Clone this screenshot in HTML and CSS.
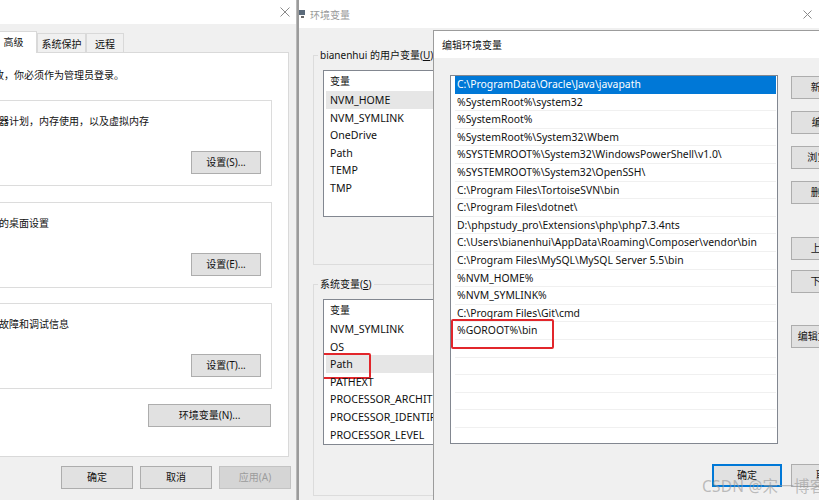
FILE: index.html
```html
<!DOCTYPE html>
<html lang="zh-CN">
<head>
<meta charset="utf-8">
<title>环境变量</title>
<link rel="stylesheet" href="styles.css">
</head>
<body>
<div class="win w1">
  <div class="tb tb1">
    <span class="xbtn"><svg width="10" height="10" viewBox="0 0 10 10"><path d="M0.5 0.5L9.5 9.5M9.5 0.5L0.5 9.5" stroke="#8a8a8a" stroke-width="1" fill="none"/></svg></span>
  </div>
  <div class="b1">
    <div class="tabs">
      <div class="tab tw-name">计算机名</div>
      <div class="tab tw-hw">硬件</div>
      <div class="tab tw-adv sel">高级</div>
      <div class="tab tw-prot">系统保护</div>
      <div class="tab tw-rem">远程</div>
    </div>
    <div class="panel">
      <div class="note">要进行大多数更改，你必须作为管理员登录。</div>
      <div class="grp">
        <div class="gtxt">视觉效果，处理器计划，内存使用，以及虚拟内存</div>
        <button class="btn bset">设置(S)...</button>
      </div>
      <div class="grp">
        <div class="gtxt">与登录帐户相关的桌面设置</div>
        <button class="btn bset">设置(E)...</button>
      </div>
      <div class="grp">
        <div class="gtxt">系统启动、系统故障和调试信息</div>
        <button class="btn bset">设置(T)...</button>
      </div>
      <div class="envrow"><button class="btn benv">环境变量(N)...</button></div>
    </div>
    <div class="foot1">
      <button class="btn bw">确定</button>
      <button class="btn bw">取消</button>
      <button class="btn bw dis">应用(A)</button>
    </div>
  </div>
</div>

<div class="win w2">
  <div class="tb tb2">
    <svg class="wicon" width="6" height="10" viewBox="0 0 6 10"><path d="M0 1h6v5H0z" fill="#5a6a7a"/><path d="M2 7h3v2H2z" fill="#6a6a6a"/></svg>
    <span class="ttl">环境变量</span>
    <span class="xbtn x2"><svg width="9" height="9" viewBox="0 0 9 9"><path d="M0.5 0.5L8.5 8.5M8.5 0.5L0.5 8.5" stroke="#8a8a8a" stroke-width="1" fill="none"/></svg></span>
  </div>
  <div class="b2">
    <fieldset class="fs fs1">
      <legend>bianenhui 的用户变量(<u>U</u>)</legend>
      <div class="lb lb-user">
        <div class="lh">变量</div>
        <div class="li hl">NVM_HOME</div>
        <div class="li">NVM_SYMLINK</div>
        <div class="li">OneDrive</div>
        <div class="li">Path</div>
        <div class="li">TEMP</div>
        <div class="li">TMP</div>
      </div>
    </fieldset>
    <fieldset class="fs fs2">
      <legend>系统变量(<u>S</u>)</legend>
      <div class="lb lb-sys">
        <div class="lh">变量</div>
        <div class="li">NVM_SYMLINK</div>
        <div class="li">OS</div>
        <div class="li hl mark-path">Path</div>
        <div class="li">PATHEXT</div>
        <div class="li">PROCESSOR_ARCHITECTURE</div>
        <div class="li">PROCESSOR_IDENTIFIER</div>
        <div class="li">PROCESSOR_LEVEL</div>
      </div>
    </fieldset>
  </div>
</div>

<div class="win w3">
  <div class="tb tb3"><span class="ttl3">编辑环境变量</span></div>
  <div class="b3">
    <div class="row3">
      <div class="plist">
        <div class="pi sel">C:\ProgramData\Oracle\Java\javapath</div>
        <div class="pi">%SystemRoot%\system32</div>
        <div class="pi">%SystemRoot%</div>
        <div class="pi">%SystemRoot%\System32\Wbem</div>
        <div class="pi">%SYSTEMROOT%\System32\WindowsPowerShell\v1.0\</div>
        <div class="pi">%SYSTEMROOT%\System32\OpenSSH\</div>
        <div class="pi">C:\Program Files\TortoiseSVN\bin</div>
        <div class="pi">C:\Program Files\dotnet\</div>
        <div class="pi">D:\phpstudy_pro\Extensions\php\php7.3.4nts</div>
        <div class="pi">C:\Users\bianenhui\AppData\Roaming\Composer\vendor\bin</div>
        <div class="pi">C:\Program Files\MySQL\MySQL Server 5.5\bin</div>
        <div class="pi">%NVM_HOME%</div>
        <div class="pi">%NVM_SYMLINK%</div>
        <div class="pi">C:\Program Files\Git\cmd</div>
        <div class="pi mark-go">%GOROOT%\bin</div>
        <div class="pi"></div>
        <div class="pi"></div>
        <div class="pi"></div>
        <div class="pi"></div>
        <div class="pi"></div>
        <div class="pi"></div>
      </div>
      <div class="bcol">
        <button class="btn bs">新建(N)</button>
        <button class="btn bs g12">编辑(E)</button>
        <button class="btn bs g12">浏览(B)...</button>
        <button class="btn bs g12">删除(D)</button>
        <button class="btn bs g33">上移(U)</button>
        <button class="btn bs g10">下移(O)</button>
        <button class="btn bs g32">编辑文本(T)...</button>
      </div>
    </div>
    <div class="foot3">
      <button class="btn bw3 def">确定</button>
      <button class="btn bw3">取消</button>
    </div>
  </div>
</div>

<div class="wm">CSDN @宋一博客</div>
</body>
</html>
```

FILE: styles.css
```css
* { box-sizing: border-box; }
html, body { margin: 0; padding: 0; }
body {
  width: 819px;
  height: 500px;
  overflow: hidden;
  position: relative;
  background: #f0f0f0;
  font-family: "Noto Sans", "Noto Sans CJK SC", sans-serif;
  font-size: 10px;
  color: #111;
}
.win {
  position: absolute;
  overflow: hidden;
  background: #f0f0f0;
}
.btn {
  font: inherit;
  color: #111;
  background: #e1e1e1;
  border: 1px solid #adadad;
  height: 23px;
  padding: 0;
  margin: 0;
  line-height: 21px;
  text-align: center;
  white-space: nowrap;
}
.tb {
  background: #fff;
  display: flex;
  align-items: center;
}
.xbtn {
  margin-left: auto;
  display: flex;
  align-items: center;
  justify-content: center;
}

/* ---------- window 1 : system properties ---------- */
.w1 {
  left: -102px;
  top: 0;
  width: 399px;
  height: 500px;
  border-right: 1px solid #b9b9b9;
}
.tb1 { height: 24px; }
.tb1 .xbtn { width: 22px; height: 24px; }
.b1 {
  padding: 7px 7px 0 8px;
}
.tabs {
  display: flex;
  align-items: flex-end;
  height: 21px;
  margin-left: 2px;
  position: relative;
  z-index: 2;
}
.tab {
  height: 19px;
  line-height: 18px;
  text-align: center;
  border: 1px solid #d9d9d9;
  border-bottom: none;
  background: #f0f0f0;
  white-space: nowrap;
}
.tab.sel {
  height: 22px;
  margin-bottom: -1px;
  background: #fff;
  line-height: 21px;
}
.tw-name { width: 48px; }
.tw-hw { width: 34px; }
.tw-adv { width: 47px; }
.tw-prot { width: 49px; line-height: 20px; }
.tw-rem { width: 38px; line-height: 20px; }
.panel {
  background: #fff;
  border: 1px solid #d9d9d9;
  height: 405px;
  padding: 15px 16px 0 14px;
}
.note { line-height: 14px; white-space: nowrap; margin-left: 3px; }
.grp {
  height: 86px;
  border: 1px solid #dcdcdc;
  margin-top: 15.5px;
  padding: 13px 10px 11px 7px;
  display: flex;
  flex-direction: column;
}
.note + .grp { margin-top: 18px; }
.gtxt { line-height: 14px; white-space: nowrap; }
.bset {
  width: 70px;
  margin-top: auto;
  align-self: flex-end;
}
.envrow {
  display: flex;
  justify-content: flex-end;
  margin-top: 15px;
  padding-right: 1px;
}
.benv { width: 123px; }
.foot1 {
  display: flex;
  justify-content: flex-end;
  gap: 7px;
  margin-top: 9px;
  margin-right: -2px;
}
.bw { width: 72px; }
.btn.dis {
  background: #d5d5d5;
  border-color: #c3c3c3;
  color: #9c9c9c;
}

/* ---------- window 2 : environment variables ---------- */
.w2 {
  left: 297px;
  top: 0;
  width: 523px;
  height: 500px;
  border-left: 2px solid #9b9b9b;
}
.tb2 { height: 28px; }
.wicon { margin-left: 0; flex: none; }
.ttl { margin-left: 5px; color: #9a9a9a; }
.x2 { width: 26px; height: 24px; }
.b2 { padding-left: 14px; }
.fs {
  margin: 0;
  border: 1px solid #dcdcdc;
  padding: 8px 9px 47px 9px;
  width: 480px;
}
.fs legend {
  line-height: 14px;
  padding: 0 2px;
  margin-left: -5px;
  white-space: nowrap;
}
.fs1 { margin-top: 20px; }
.fs2 { margin-top: 12px; padding-bottom: 50px; }
.lb {
  background: #fff;
  border: 1px solid #828790;
  width: 420px;
  overflow: hidden;
}
.lb-user { height: 147px; }
.lb-sys { height: 146px; }
.lh {
  height: 20px;
  line-height: 20px;
  padding-left: 6px;
}
.li {
  height: 17.6px;
  line-height: 18.6px;
  margin-left: 2px;
  padding-left: 4px;
  white-space: nowrap;
  position: relative;
  font-size: 10.6px;
}
.li.hl { background: #e6e6e6; }
.mark-path::after {
  content: "";
  position: absolute;
  left: -7px;
  top: -2px;
  width: 48px;
  height: 22px;
  border: 2px solid #e2262b;
  border-radius: 2px;
}

/* ---------- window 3 : edit environment variable ---------- */
.w3 {
  left: 433px;
  top: 30px;
  width: 387px;
  height: 470px;
  border-top: 1px solid #9c9c9c;
  border-left: 1px solid #9c9c9c;
}
.tb3 { height: 27px; }
.ttl3 { padding-left: 8px; }
.b3 { padding: 17px 0 0 16px; }
.row3 {
  display: flex;
  align-items: flex-start;
}
.plist {
  flex: none;
  width: 328px;
  height: 369px;
  background: #fff;
  border: 1px solid #828790;
  padding: 0 1px 0 4px;
  overflow: hidden;
}
.pi {
  height: 17.6px;
  line-height: 17.6px;
  padding-left: 2px;
  border-bottom: 1px solid #f0f0f0;
  white-space: nowrap;
  position: relative;
  font-size: 10.4px;
}
.pi.sel {
  background: #0078d7;
  color: #fff;
  border-bottom-color: #0078d7;
}
.mark-go::after {
  content: "";
  position: absolute;
  left: -4px;
  top: -3.5px;
  width: 99px;
  height: 26px;
  border: 2px solid #e2262b;
  border-radius: 2px;
}
.bcol {
  flex: none;
  display: flex;
  flex-direction: column;
  margin-left: 13px;
  padding-top: 1px;
}
.bs { width: 73px; }
.g12 { margin-top: 12px; }
.g33 { margin-top: 33px; }
.g10 { margin-top: 10px; }
.g32 { margin-top: 32px; }
.foot3 {
  display: flex;
  gap: 9px;
  margin-top: 20px;
  padding-left: 262px;
}
.bw3 { width: 70px; flex: none; }
.btn.def {
  border: 1px solid #0078d7;
  box-shadow: inset 0 0 0 1px #0078d7;
}

/* ---------- watermark ---------- */
.wm {
  position: absolute;
  left: 702px;
  top: 476px;
  font-size: 15.5px;
  line-height: 20px;
  letter-spacing: 0.2px;
  color: rgba(150, 150, 150, 0.6);
  white-space: nowrap;
  z-index: 10;
}
```
